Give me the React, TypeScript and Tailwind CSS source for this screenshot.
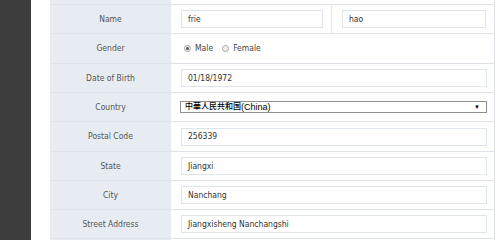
import React from "react";

const font = { fontFamily: '"DejaVu Sans Condensed", "DejaVu Sans", Verdana, sans-serif', fontStretch: "condensed" as const };

function Label({ children }: { children: React.ReactNode }) {
  return (
    <div className="w-[121px] shrink-0 bg-[#e7ecf2] flex items-center justify-center text-[8.5px] text-[#555]">
      {children}
    </div>
  );
}

function Input({ value, w }: { value: string; w: string }) {
  return (
    <div className={`${w} h-[18px] border border-[#dfe5ec] bg-white flex items-center pl-[6px] text-[8.5px] text-[#333]`}>
      {value}
    </div>
  );
}

function Row({ h, children }: { h: string; children: React.ReactNode }) {
  return <div className={`${h} flex border-b border-[#dfe3e9] box-border`}>{children}</div>;
}

function Radio({ checked }: { checked?: boolean }) {
  return (
    <span className="w-[7px] h-[7px] rounded-full border border-[#a9a9a9] bg-[#eeeeee] flex items-center justify-center">
      {checked && <span className="w-[3px] h-[3px] rounded-full bg-[#555]" />}
    </span>
  );
}

export default function App() {
  const simple: [string, string, string][] = [
    ["Postal Code", "256339", "h-[30px]"],
    ["State", "Jiangxi", "h-[29px]"],
    ["City", "Nanchang", "h-[29px]"],
    ["Street Address", "Jiangxisheng Nanchangshi", "h-[29px]"],
  ];
  const selFont = { fontFamily: '"Liberation Sans", "Noto Sans CJK SC", sans-serif', fontStretch: "normal" as const };
  return (
    <div className="w-[500px] h-[240px] overflow-hidden bg-white flex" style={font}>
      <div className="w-[31px] shrink-0 bg-[#3d3d3d]" />
      <div className="w-[19px] shrink-0" />
      <div className="w-[445px] shrink-0 flex flex-col border-r border-[#dfe3e9]">
        <Row h="h-[5px]">
          <div className="w-[121px] shrink-0 bg-[#e7ecf2]" />
          <div className="flex-1" />
        </Row>
        <Row h="h-[29px]">
          <Label>Name</Label>
          <div className="w-[161px] flex items-center pl-[10px] border-r border-[#e3e7ec]">
            <Input value="frie" w="w-[142px]" />
          </div>
          <div className="flex-1 flex items-center pl-[10px]">
            <Input value="hao" w="w-[144px]" />
          </div>
        </Row>
        <Row h="h-[30px]">
          <Label>Gender</Label>
          <div className="flex-1 flex items-center pl-[13px] text-[8.5px] text-[#444]">
            <Radio checked />
            <span className="ml-[4px]">Male</span>
            <span className="ml-[9px]"><Radio /></span>
            <span className="ml-[4px]">Female</span>
          </div>
        </Row>
        <Row h="h-[29px]">
          <Label>Date of Birth</Label>
          <div className="flex-1 flex items-center pl-[10px]">
            <Input value="01/18/1972" w="w-[306px]" />
          </div>
        </Row>
        <Row h="h-[29px]">
          <Label>Country</Label>
          <div className="flex-1 flex items-center pl-[9px]">
            <div className="w-[307px] h-[12px] border border-[#8f8f8f] bg-white flex items-center pl-[4px] pr-[6px] text-black" style={selFont}>
              <span className="text-[8px] font-medium leading-none">中華人民共和国</span>
              <span className="text-[9px] leading-none">(China)</span>
              <span className="ml-auto text-[6px] leading-none">▼</span>
            </div>
          </div>
        </Row>
        {simple.map(([l, v, h]) => (
          <Row key={l} h={h}>
            <Label>{l}</Label>
            <div className="flex-1 flex items-center pl-[10px]">
              <Input value={v} w="w-[306px]" />
            </div>
          </Row>
        ))}
        <div className="flex flex-1">
          <div className="w-[121px] shrink-0 bg-[#e7ecf2]" />
        </div>
      </div>
    </div>
  );
}
